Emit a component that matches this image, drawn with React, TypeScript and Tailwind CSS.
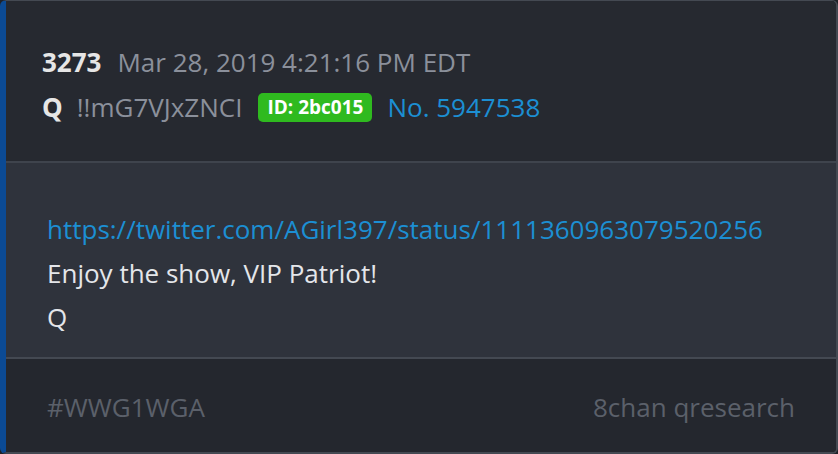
export default function App() {
  return (
    <div className="w-[838px] h-[454px] bg-[#1f2228]" style={{ fontFamily: '"Open Sans", sans-serif' }}>
      <div className="w-[838px] h-[454px] rounded-[6px] border-t border-r-2 border-b-2 border-l-[6px] border-t-[#444952] border-r-[#444952] border-b-[#444952] border-l-[#0b4a94] overflow-hidden flex flex-col">
        <div className="h-[162px] bg-[#262930] pl-[36px] pt-[39px] border-b-2 border-[#3f444d]">
          <div className="flex items-center h-[45px] text-[26px]">
            <span className="font-bold text-[#e6e6e6]">3273</span>
            <span className="ml-[16px] text-[#8b909b]">Mar 28, 2019 4:21:16 PM EDT</span>
          </div>
          <div className="flex items-center h-[45px] text-[26px]">
            <span className="font-bold text-[#e6e6e6]">Q</span>
            <span className="ml-[14px] text-[#8b909b]">!!mG7VJxZNCI</span>
            <span className="ml-[16px] bg-[#2fba1f] text-white font-bold text-[19px] rounded-[5px] px-[9px] h-[29px] flex items-center">ID: 2bc015</span>
            <span className="ml-[15px] text-[#1c8fd3]">No. 5947538</span>
          </div>
        </div>
        <div className="h-[196px] bg-[#2f333c] pl-[41px] pt-[44px] border-b-2 border-[#444952] text-[26px]">
          <div className="h-[44px] flex items-center text-[#1c8fd3]">https://twitter.com/AGirl397/status/1111360963079520256</div>
          <div className="h-[44px] flex items-center text-[#e4e6ea]">Enjoy the show, VIP Patriot!</div>
          <div className="h-[44px] flex items-center text-[#e4e6ea]">Q</div>
        </div>
        <div className="flex-1 bg-[#24272e] pl-[41px] pr-[41px] flex items-center justify-between text-[26px] text-[#5b606a] pt-[4px]">
          <span>#WWG1WGA</span>
          <span>8chan qresearch</span>
        </div>
      </div>
    </div>
  );
}
